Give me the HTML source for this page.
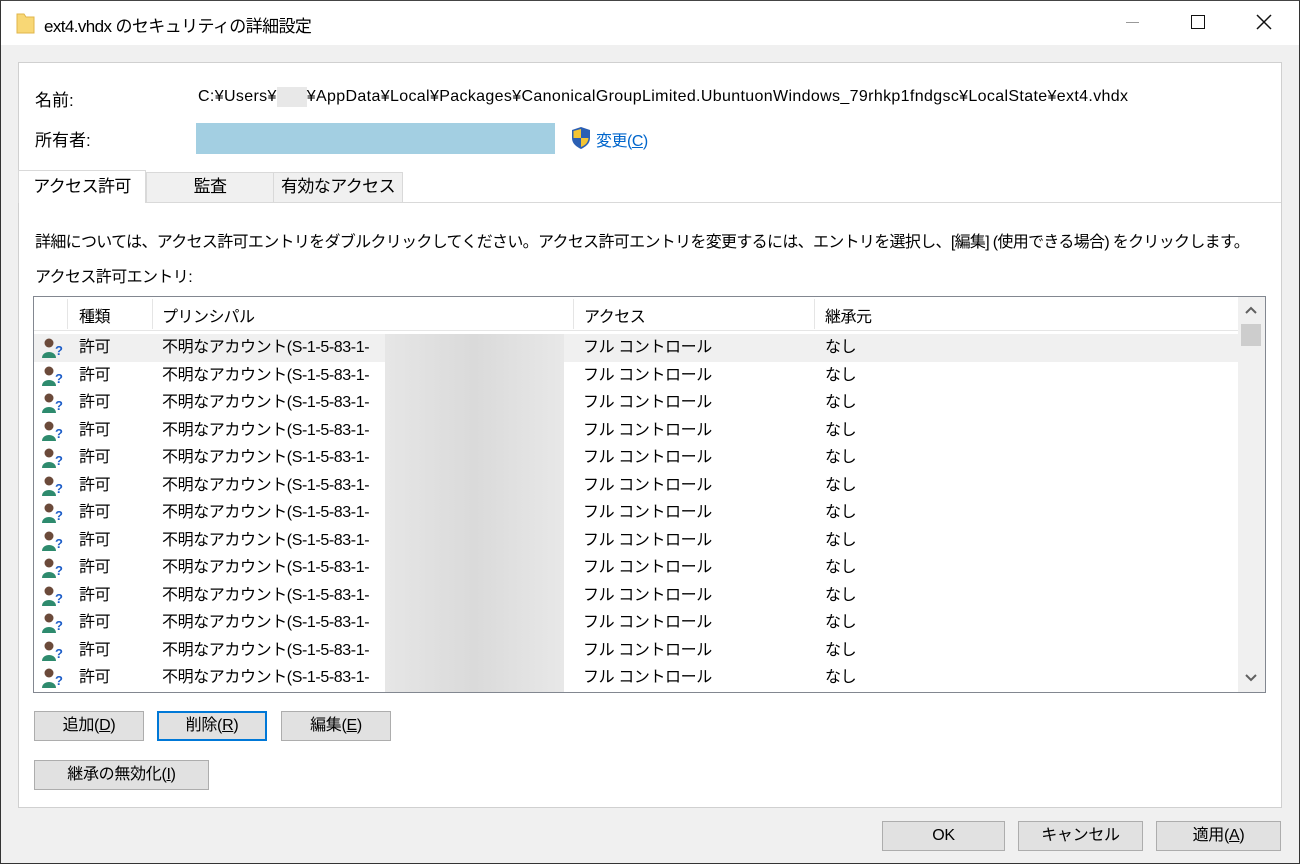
<!DOCTYPE html>
<html><head><meta charset="utf-8"><style>
*{margin:0;padding:0;box-sizing:border-box}
body{width:1300px;height:864px;background:#f0f0f0;font-family:"Liberation Sans","Noto Sans CJK JP",sans-serif;font-size:16px;color:#000;position:relative;overflow:hidden}
.a{position:absolute;white-space:nowrap}
.win{position:absolute;left:0;top:0;width:1300px;height:864px;border:1px solid #333;border-top:1px solid #444}
.title{position:absolute;left:1px;top:1px;width:1298px;height:44px;background:#fff}
.panel{position:absolute;left:18px;top:62px;width:1264px;height:746px;background:#fff;border:1px solid #d0d0d0}
.btn{position:absolute;height:30px;background:#e1e1e1;border:1px solid #adadad;text-align:center;line-height:28px;font-size:16px;letter-spacing:-0.3px}
.tab{position:absolute;top:172px;height:30px;border:1px solid #d9d9d9;border-bottom:none;background:#f0f0f0;text-align:center;line-height:28px;font-size:17px;letter-spacing:-0.6px}
.list{position:absolute;left:33px;top:296px;width:1233px;height:397px;border:1px solid #828790;background:#fff;overflow:hidden}
.row{position:absolute;left:0;height:27.5px;width:1205px;line-height:27px;letter-spacing:-0.4px}
.row span{position:absolute}
</style></head><body>
<div class="win"></div>
<div class="title"></div>
<svg class="a" style="left:16px;top:12px" width="20" height="22"><path d="M1 2h7l2 3h8v16H1z" fill="#f8d775" stroke="#e0b64a"/></svg>
<div class="a" style="left:44px;top:12px;font-size:17px;letter-spacing:-0.6px">ext4.vhdx のセキュリティの詳細設定</div>
<div class="a" style="left:1126px;top:22px;width:13px;height:1px;background:#999"></div>
<div class="a" style="left:1191px;top:15px;width:14px;height:14px;border:1.5px solid #111"></div>
<svg class="a" style="left:1256px;top:14px" width="16" height="16"><path d="M1 1L15 15M15 1L1 15" stroke="#111" stroke-width="1.5"/></svg>
<div class="panel"></div>
<div class="a" style="left:35px;top:86px;font-size:17px">名前:</div>
<div class="a" style="left:198px;top:87px;font-size:16px;letter-spacing:0.35px">C:¥Users¥<span style="display:inline-block;width:30px;height:20px;background:#e8e8e8;vertical-align:middle"></span>¥AppData¥Local¥Packages¥CanonicalGroupLimited.UbuntuonWindows_79rhkp1fndgsc¥LocalState¥ext4.vhdx</div>
<div class="a" style="left:35px;top:126px;font-size:17px">所有者:</div>
<div class="a" style="left:196px;top:123px;width:359px;height:31px;background:#a3cfe2"></div>
<svg class="a" style="left:570px;top:126px" width="22" height="24"><path d="M11 1L20 4V12C20 18 15 21 11 23C7 21 2 18 2 12V4Z" fill="#2b5fb3"/><path d="M11 3V12H3.5V5ZM11 12H18.5C18 17 15 19.5 11 21Z" fill="#f4c534"/></svg>
<div class="a" style="left:596px;top:127px;color:#0066cc;font-size:16px;letter-spacing:-0.5px">変更(<u>C</u>)</div>
<div class="a" style="left:146px;top:202px;width:1135px;height:1px;background:#d9d9d9"></div>
<div class="tab" style="left:146px;width:128px">監査</div>
<div class="tab" style="left:273px;width:130px">有効なアクセス</div>
<div class="tab" style="left:18px;top:170px;height:33px;width:128px;background:#fff;line-height:32px">アクセス許可</div>
<div class="a" style="left:35px;top:228px;font-size:16px;letter-spacing:-0.68px">詳細については、アクセス許可エントリをダブルクリックしてください。アクセス許可エントリを変更するには、エントリを選択し、[編集] (使用できる場合) をクリックします。</div>
<div class="a" style="left:35px;top:263px;font-size:16px;letter-spacing:-0.6px">アクセス許可エントリ:</div>
<div class="list">
 <div class="a" style="left:0;top:0;width:1205px;height:34px;border-bottom:1px solid #e5e5e5"></div>
 <div class="a" style="left:33px;top:2px;width:1px;height:30px;background:#e5e5e5"></div>
 <div class="a" style="left:118px;top:2px;width:1px;height:30px;background:#e5e5e5"></div>
 <div class="a" style="left:539px;top:2px;width:1px;height:30px;background:#e5e5e5"></div>
 <div class="a" style="left:780px;top:2px;width:1px;height:30px;background:#e5e5e5"></div>
 <div class="a" style="left:45px;top:6px;letter-spacing:-0.5px">種類</div>
 <div class="a" style="left:128px;top:6px;letter-spacing:-0.5px">プリンシパル</div>
 <div class="a" style="left:550px;top:6px;letter-spacing:-0.5px">アクセス</div>
 <div class="a" style="left:791px;top:6px;letter-spacing:-0.5px">継承元</div>
 <div id="rows"></div>
 <div class="a" style="left:351px;top:37px;width:179px;height:358px;background:linear-gradient(90deg,#e6e6e6,#dadada 50%,#e8e8e8)"></div>
 <div class="a" style="left:1204px;top:0;width:27px;height:395px;background:#f0f0f0"></div>
 <div class="a" style="left:1207px;top:27px;width:20px;height:22px;background:#cdcdcd"></div>
 <svg class="a" style="left:1210px;top:8px" width="14" height="10"><path d="M2 8L7 3L12 8" stroke="#606060" stroke-width="2" fill="none"/></svg>
 <svg class="a" style="left:1210px;top:376px" width="14" height="10"><path d="M2 2L7 7L12 2" stroke="#606060" stroke-width="2" fill="none"/></svg>
</div>
<script>
var h='';for(var i=0;i<13;i++){var t=37+i*27.5;h+='<div class="row" style="top:'+t+'px;'+(i==0?'background:#f0f0f0;':'')+'">'+
'<svg style="position:absolute;left:6px;top:3px" width="24" height="22"><circle cx="9" cy="6" r="4.5" fill="#6b4a3a"/><path d="M2 21C2 13 16 13 16 21Z" fill="#2e8b6e"/><text x="15" y="18" font-size="13" font-weight="bold" fill="#1e5ec8" font-family="Liberation Sans">?</text></svg>'+
'<span style="left:45px">許可</span><span style="left:128px">不明なアカウント(S-1-5-83-1-</span><span style="left:549px">フル コントロール</span><span style="left:791px">なし</span></div>';}
document.getElementById('rows').innerHTML=h;
</script>
<div class="btn" style="left:34px;top:711px;width:110px">追加(<u>D</u>)</div>
<div class="btn" style="left:157px;top:711px;width:110px;border:2px solid #0078d7;line-height:26px">削除(<u>R</u>)</div>
<div class="btn" style="left:281px;top:711px;width:110px">編集(<u>E</u>)</div>
<div class="btn" style="left:34px;top:760px;width:175px">継承の無効化(<u>I</u>)</div>
<div class="btn" style="left:882px;top:821px;width:123px">OK</div>
<div class="btn" style="left:1018px;top:821px;width:125px">キャンセル</div>
<div class="btn" style="left:1156px;top:821px;width:125px">適用(<u>A</u>)</div>
</body></html>
